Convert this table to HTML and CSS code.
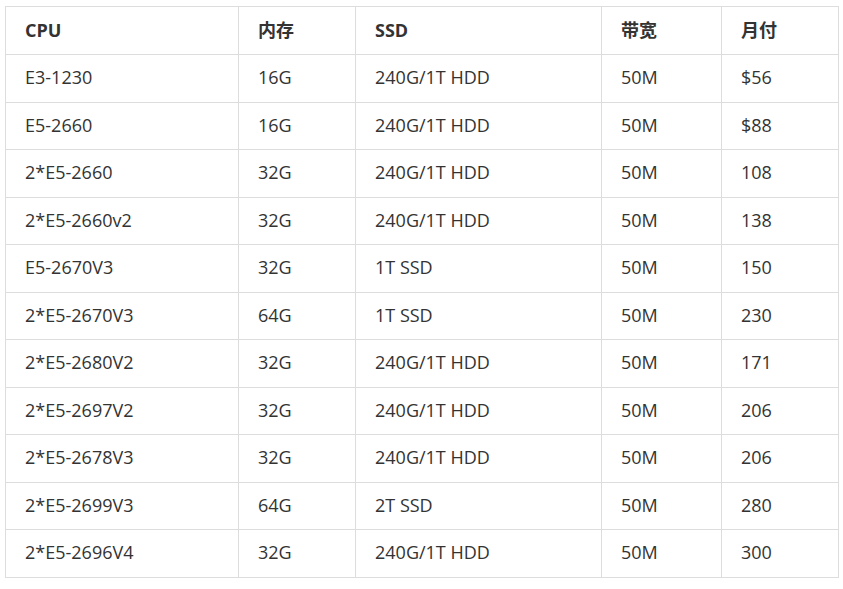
FILE: index.html
```html
<!DOCTYPE html>
<html lang="zh">
<head>
<meta charset="utf-8">
<link rel="stylesheet" href="styles.css">
</head>
<body>
<table class="spec">
  <colgroup>
    <col class="c1"><col class="c2"><col class="c3"><col class="c4"><col class="c5">
  </colgroup>
  <thead>
    <tr><th>CPU</th><th>内存</th><th>SSD</th><th>带宽</th><th>月付</th></tr>
  </thead>
  <tbody>
    <tr><td>E3-1230</td><td>16G</td><td>240G/1T HDD</td><td>50M</td><td>$56</td></tr>
    <tr><td>E5-2660</td><td>16G</td><td>240G/1T HDD</td><td>50M</td><td>$88</td></tr>
    <tr><td>2*E5-2660</td><td>32G</td><td>240G/1T HDD</td><td>50M</td><td>108</td></tr>
    <tr><td>2*E5-2660v2</td><td>32G</td><td>240G/1T HDD</td><td>50M</td><td>138</td></tr>
    <tr><td>E5-2670V3</td><td>32G</td><td>1T SSD</td><td>50M</td><td>150</td></tr>
    <tr><td>2*E5-2670V3</td><td>64G</td><td>1T SSD</td><td>50M</td><td>230</td></tr>
    <tr><td>2*E5-2680V2</td><td>32G</td><td>240G/1T HDD</td><td>50M</td><td>171</td></tr>
    <tr><td>2*E5-2697V2</td><td>32G</td><td>240G/1T HDD</td><td>50M</td><td>206</td></tr>
    <tr><td>2*E5-2678V3</td><td>32G</td><td>240G/1T HDD</td><td>50M</td><td>206</td></tr>
    <tr><td>2*E5-2699V3</td><td>64G</td><td>2T SSD</td><td>50M</td><td>280</td></tr>
    <tr><td>2*E5-2696V4</td><td>32G</td><td>240G/1T HDD</td><td>50M</td><td>300</td></tr>
  </tbody>
</table>
</body>
</html>
```
FILE: styles.css
```css
html, body {
  margin: 0;
  padding: 0;
  background: #ffffff;
}
body {
  padding: 6px 0 0 5px;
  font-family: "Open Sans", "Noto Sans CJK SC", sans-serif;
  color: #333333;
}
.spec {
  border-collapse: collapse;
  width: 833px;
  table-layout: fixed;
  font-size: 18px;
}
.c1 { width: 233px; }
.c2 { width: 117px; }
.c3 { width: 246px; }
.c4 { width: 120px; }
.c5 { width: 117px; }
.spec th, .spec td {
  border: 1px solid #dddddd;
  text-align: left;
  padding: 0 20px 2px 19px;
  line-height: 24px;
  white-space: nowrap;
}
.spec th {
  height: 45px;
  font-weight: 700;
}
.spec td {
  height: 44.5px;
  font-weight: 400;
}
```
